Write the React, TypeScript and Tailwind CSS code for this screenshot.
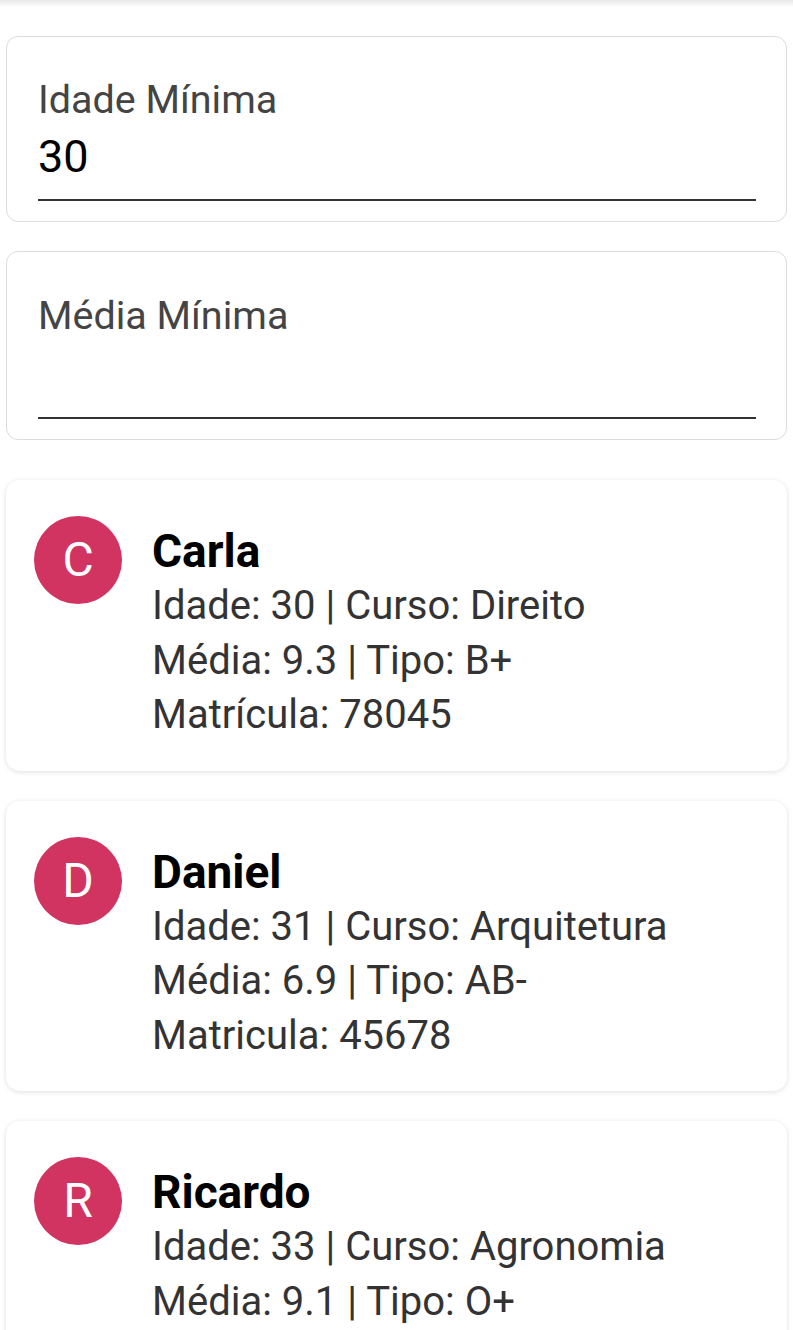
import React from 'react';

interface Aluno {
  nome: string;
  idade: number;
  curso: string;
  media: string;
  tipo: string;
  matricula: string;
  matriculaLabel: string;
}

const alunos: Aluno[] = [
  { nome: 'Carla', idade: 30, curso: 'Direito', media: '9.3', tipo: 'B+', matricula: '78045', matriculaLabel: 'Matrícula' },
  { nome: 'Daniel', idade: 31, curso: 'Arquitetura', media: '6.9', tipo: 'AB-', matricula: '45678', matriculaLabel: 'Matricula' },
  { nome: 'Ricardo', idade: 33, curso: 'Agronomia', media: '9.1', tipo: 'O+', matricula: '11223', matriculaLabel: 'Matrícula' },
];

function FilterField({ label, value, tall }: { label: string; value: string; tall?: boolean }) {
  return (
    <div
      className={`rounded-[12px] border border-[#dcdcdc] bg-white pl-[31px] pr-[30px] pb-[20px] ${
        tall ? 'pt-[42px]' : 'pt-[41px]'
      }`}
    >
      <div className="text-[39.5px] leading-[44px] text-[#444]">{label}</div>
      <div className="mt-[9px] h-[52px] text-[45px] leading-[52px] text-black">{value}</div>
      <div className={`h-[2px] bg-[#333] ${tall ? 'mt-[18px]' : 'mt-[16px]'}`} />
    </div>
  );
}

function AlunoCard({ aluno }: { aluno: Aluno }) {
  return (
    <div className="flex items-start gap-[30px] rounded-[14px] bg-white pl-[28px] pr-4 pt-[36px] pb-[28px] shadow-[0_1px_5px_rgba(0,0,0,0.13)]">
      <div className="flex h-[88px] w-[88px] shrink-0 items-center justify-center rounded-full bg-[#d13461] text-[48px] leading-none text-white">
        {aluno.nome[0]}
      </div>
      <div className="mt-[7px] flex flex-col">
        <div className="text-[46px] font-bold leading-[56px] text-black">{aluno.nome}</div>
        <div className="text-[40px] leading-[54.5px] text-[#333]">
          <div>Idade: {aluno.idade} | Curso: {aluno.curso}</div>
          <div>Média: {aluno.media} | Tipo: {aluno.tipo}</div>
          <div>{aluno.matriculaLabel}: {aluno.matricula}</div>
        </div>
      </div>
    </div>
  );
}

export default function App() {
  return (
    <div className="h-[1330px] overflow-hidden bg-white font-['Roboto',sans-serif]">
      {/* sombra da barra superior */}
      <div className="h-[7px] bg-gradient-to-b from-[#e8e8e8] to-white" />
      <div className="flex flex-col px-[6px] pt-[29px]">
        <div className="flex flex-col gap-[29px]">
          <FilterField label="Idade Mínima" value="30" />
          <FilterField label="Média Mínima" value="" tall />
        </div>
        <div className="mt-[40px] flex flex-col gap-[30px]">
          {alunos.map((a) => (
            <AlunoCard key={a.nome} aluno={a} />
          ))}
        </div>
      </div>
    </div>
  );
}
